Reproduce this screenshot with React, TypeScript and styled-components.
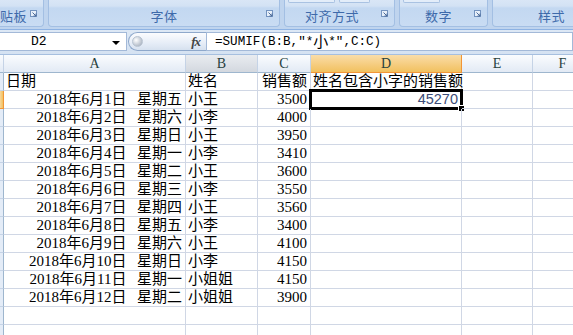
import React from "react";
import styled, { createGlobalStyle } from "styled-components";

const GlobalStyle = createGlobalStyle`
  html, body { margin: 0; padding: 0; background: #ffffff; overflow: hidden; }
  * { box-sizing: border-box; }
`;

const CJK = `"Noto Sans CJK SC", "Noto Sans", sans-serif`;
const CELLFONT = `"Liberation Serif", "Noto Sans CJK SC", serif`;

const Frame = styled.div`
  width: 573px;
  height: 335px;
  overflow: hidden;
  display: flex;
  flex-direction: column;
  background: #ffffff;
  font-family: ${CJK};
`;

/* ---------- Ribbon ---------- */
const Ribbon = styled.div`
  height: 30px;
  flex: none;
  display: flex;
  gap: 4px;
  background: #bfd4ee;
  border-bottom: 1px solid #8db2e3;
  padding-bottom: 2px;
  overflow: hidden;
`;

const Group = styled.div<{ $w: number; $first?: boolean }>`
  width: ${(p) => p.$w}px;
  flex: none;
  position: relative;
  display: flex;
  flex-direction: column;
  justify-content: flex-end;
  border: 1px solid #a3bfe3;
  border-top: none;
  ${(p) => (p.$first ? "border-left: none; border-radius: 0 0 4px 0;" : "border-radius: 0 0 4px 4px;")}
  background: linear-gradient(#d9e6f6 0px, #d3e2f4 6px, #c3d8f1 8px, #c9dcf3 27px);
`;

const GroupTop = styled.div`
  height: 4px;
  display: flex;
  gap: 4px;
  padding-left: 3px;
  align-items: flex-start;
`;

const MiniButton = styled.div<{ $w: number }>`
  width: ${(p) => p.$w}px;
  height: 3px;
  border: 1px solid #a9c2e2;
  border-top: none;
  border-radius: 0 0 2px 2px;
  background: #e3edf9;
`;

const GroupLabel = styled.div<{ $align?: string; $pl?: number }>`
  height: 22px;
  display: flex;
  align-items: center;
  justify-content: ${(p) => p.$align || "center"};
  padding-left: ${(p) => p.$pl || 0}px;
  font-size: 13px;
  color: #3e6aaa;
  letter-spacing: 0.5px;
  position: relative;
`;

const Launcher = styled.svg`
  position: absolute;
  right: 5px;
  top: 6px;
`;

const LauncherIcon = () => (
  <Launcher width="8" height="8" viewBox="0 0 8 8">
    <rect x="0.5" y="0.5" width="6" height="6" fill="#e8f0fa" stroke="#7393bf" />
    <path d="M2.5 2.5 L6 6 M6 3.5 L6 6 L3.5 6" stroke="#4a6a99" strokeWidth="1" fill="none" />
  </Launcher>
);

/* ---------- Formula bar ---------- */
const FormulaArea = styled.div`
  height: 25px;
  flex: none;
  display: flex;
  align-items: stretch;
  padding: 2px 0 3px 0;
  background: linear-gradient(#dde8f5, #d5e2f2);
  border-bottom: 1px solid #a6bfdf;
`;

const NameBox = styled.div`
  width: 127px;
  flex: none;
  display: flex;
  align-items: center;
  background: #ffffff;
  border: 1px solid #a3b9d8;
  border-left: none;
  padding-left: 31px;
  font-family: "Liberation Mono", monospace;
  font-size: 13px;
  color: #000;
  position: relative;
`;

const DropArrow = styled.div`
  position: absolute;
  right: 6px;
  top: 8px;
  width: 0;
  height: 0;
  border-left: 4px solid transparent;
  border-right: 4px solid transparent;
  border-top: 4px solid #000;
`;

const FxPill = styled.div`
  width: 78px;
  flex: none;
  display: flex;
  align-items: center;
  justify-content: space-between;
  margin-left: 1px;
  padding: 0 6px 0 3px;
  border: 1px solid #8ea8cb;
  border-right: none;
  border-radius: 10px 0 0 10px;
  background: linear-gradient(#fbfcfe, #e6edf7 60%, #d6e1ef);
`;

const Knob = styled.div`
  width: 11px;
  height: 11px;
  border-radius: 50%;
  background: radial-gradient(circle at 35% 35%, #ffffff 0%, #d0d6de 45%, #98a3b2 100%);
  border: 1px solid #b8c3d1;
`;

const FxText = styled.span`
  font-family: "Liberation Serif", "DejaVu Serif", serif;
  font-style: italic;
  font-weight: bold;
  font-size: 13px;
  color: #444;
  letter-spacing: -1px;
`;

const FormulaInput = styled.div`
  flex: 1;
  display: flex;
  align-items: center;
  background: #ffffff;
  border: 1px solid #a3b9d8;
  padding-left: 8px;
  font-family: "Liberation Mono", monospace;
  font-size: 12.6px;
  color: #000;
  white-space: pre;
`;

const Wide = styled.span`
  font-family: ${CJK};
  font-size: 15px;
  line-height: 1;
  position: relative;
  top: -1px;
`;

/* ---------- Grid ---------- */
const Sheet = styled.div`
  flex: 1;
  display: grid;
  grid-template-columns: 4px 182px 72px 53px 151px 71px 60px;
  grid-auto-rows: 18px;
  overflow: hidden;
  align-content: start;
`;

const ColHead = styled.div<{ $state?: "sel" | "hover" }>`
  display: flex;
  align-items: center;
  justify-content: center;
  font-family: "Liberation Serif", serif;
  font-size: 14px;
  color: #27413e;
  border-right: 1px solid ${(p) => (p.$state === "sel" ? "#f29536" : "#c5d3e6")};
  border-bottom: 1px solid ${(p) => (p.$state === "sel" ? "#f29536" : "#9eb6ce")};
  background: ${(p) =>
    p.$state === "sel"
      ? "linear-gradient(#f9dda9, #f6cd80 55%, #f1c15f)"
      : p.$state === "hover"
      ? "linear-gradient(#e9ecf0, #dde1e7 55%, #d3d8df)"
      : "linear-gradient(#fafcfe, #edf2f9 55%, #e2eaf5)"};
`;

const RowHead = styled.div<{ $sel?: boolean }>`
  border-right: 1px solid ${(p) => (p.$sel ? "#f29536" : "#9eb6ce")};
  border-bottom: 1px solid ${(p) => (p.$sel ? "#f29536" : "#c5d3e6")};
  background: ${(p) => (p.$sel ? "linear-gradient(90deg, #f8d79b, #f1c15f)" : "#e4ecf7")};
`;

const Cell = styled.div<{ $align?: "left" | "right" }>`
  position: relative;
  display: flex;
  align-items: center;
  justify-content: ${(p) => (p.$align === "right" ? "flex-end" : "flex-start")};
  padding: 0 ${(p) => (p.$align === "right" ? "3px" : "0")} 0 ${(p) => (p.$align === "right" ? "0" : "2px")};
  border-right: 1px solid #d0d7e5;
  border-bottom: 1px solid #d0d7e5;
  font-family: ${CELLFONT};
  font-size: 15px;
  line-height: 17px;
  color: #000;
  white-space: pre;
  overflow: visible;
`;

const ResultText = styled.span`
  color: #3c4d78;
  font-family: "Liberation Sans", Arial, sans-serif;
  font-size: 14.5px;
`;

const Selection = styled.div`
  position: absolute;
  left: -2px;
  top: -2px;
  right: -2px;
  bottom: -2px;
  border: 3px solid #000;
  pointer-events: none;
`;

const FillHandle = styled.div`
  position: absolute;
  right: -5px;
  bottom: -5px;
  width: 7px;
  height: 7px;
  background: #000;
  border: 1px solid #fff;
`;

const colLetters = ["A", "B", "C", "D", "E", "F"];

const GAP = "  \u2009";
type Row = [string, string, string, string];
const data: Row[] = [
  ["2018年6月1日", "星期五", "小王", "3500"],
  ["2018年6月2日", "星期六", "小李", "4000"],
  ["2018年6月3日", "星期日", "小王", "3950"],
  ["2018年6月4日", "星期一", "小李", "3410"],
  ["2018年6月5日", "星期二", "小王", "3600"],
  ["2018年6月6日", "星期三", "小李", "3550"],
  ["2018年6月7日", "星期四", "小王", "3560"],
  ["2018年6月8日", "星期五", "小李", "3400"],
  ["2018年6月9日", "星期六", "小王", "4100"],
  ["2018年6月10日", "星期日", "小李", "4150"],
  ["2018年6月11日", "星期一", "小姐姐", "4150"],
  ["2018年6月12日", "星期二", "小姐姐", "3900"],
];

export default function App() {
  return (
    <>
      <GlobalStyle />
      <Frame>
        <Ribbon>
          <Group $w={44} $first>
            <GroupTop />
            <GroupLabel $align="flex-start">
              贴板
              <LauncherIcon />
            </GroupLabel>
          </Group>
          <Group $w={232}>
            <GroupTop />
            <GroupLabel>
              字体
              <LauncherIcon />
            </GroupLabel>
          </Group>
          <Group $w={111}>
            <GroupTop>
              <MiniButton $w={47} />
              <MiniButton $w={31} />
            </GroupTop>
            <GroupLabel $align="flex-start" $pl={20}>
              对齐方式
              <LauncherIcon />
            </GroupLabel>
          </Group>
          <Group $w={89}>
            <GroupTop>
              <MiniButton $w={37} />
            </GroupTop>
            <GroupLabel $align="flex-start" $pl={25}>
              数字
              <LauncherIcon />
            </GroupLabel>
          </Group>
          <Group $w={100}>
            <GroupTop />
            <GroupLabel $align="flex-start" $pl={45}>
              样式
            </GroupLabel>
          </Group>
        </Ribbon>

        <FormulaArea>
          <NameBox>
            D2
            <DropArrow />
          </NameBox>
          <FxPill>
            <Knob />
            <FxText>fx</FxText>
          </FxPill>
          <FormulaInput>
            =SUMIF(B:B,"*<Wide>小</Wide>*",C:C)
          </FormulaInput>
        </FormulaArea>

        <Sheet>
          <ColHead />
          {colLetters.map((l) => (
            <ColHead key={l} $state={l === "D" ? "sel" : l === "B" ? "hover" : undefined}>
              {l}
            </ColHead>
          ))}

          <RowHead />
          <Cell>日期</Cell>
          <Cell>姓名</Cell>
          <Cell $align="right">销售额</Cell>
          <Cell>姓名包含小字的销售额</Cell>
          <Cell />
          <Cell />

          {data.map((r, i) => (
            <React.Fragment key={i}>
              <RowHead $sel={i === 0} />
              <Cell $align="right">{r[0] + GAP + r[1]}</Cell>
              <Cell>{r[2]}</Cell>
              <Cell $align="right">{r[3]}</Cell>
              <Cell $align="right">
                {i === 0 && (
                  <>
                    <ResultText>45270</ResultText>
                    <Selection>
                      <FillHandle />
                    </Selection>
                  </>
                )}
              </Cell>
              <Cell />
              <Cell />
            </React.Fragment>
          ))}

          {[0, 1].map((k) => (
            <React.Fragment key={`e${k}`}>
              <RowHead />
              <Cell />
              <Cell />
              <Cell />
              <Cell />
              <Cell />
              <Cell />
            </React.Fragment>
          ))}
        </Sheet>
      </Frame>
    </>
  );
}
